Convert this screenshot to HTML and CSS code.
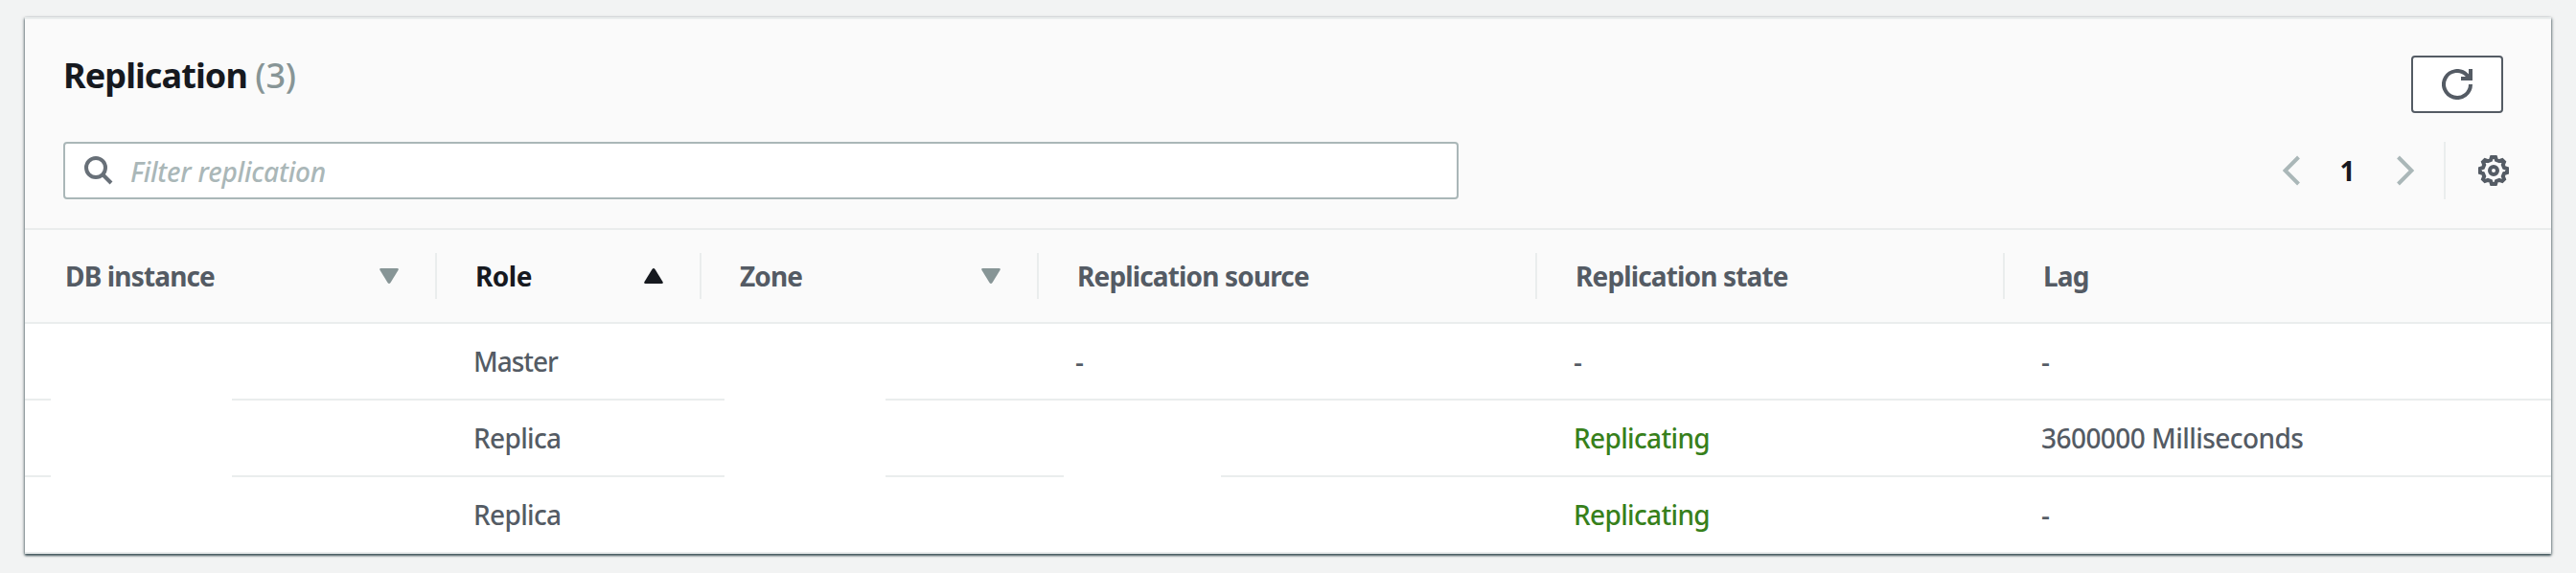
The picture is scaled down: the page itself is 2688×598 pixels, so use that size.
FILE: index.html
```html
<!DOCTYPE html>
<html lang="en">
<head>
<meta charset="utf-8">
<title>Replication</title>
<link rel="stylesheet" href="styles.css">
</head>
<body>
<section class="panel">
  <header class="toolbar">
    <div class="title-row">
      <h2 class="title">Replication <span class="count">(3)</span></h2>
      <button class="refresh" aria-label="Refresh">
        <svg width="32" height="32" viewBox="0 0 32 32" fill="none" stroke="currentColor" stroke-width="4"><path d="M30 16a14 14 0 1 1-4.100-9.900l2.500 3"/><path d="M30 0v10H20"/></svg>
      </button>
    </div>
    <div class="filter-row">
      <label class="search">
        <svg class="search-icon" width="30" height="30" viewBox="0 0 30 30" fill="none" stroke="currentColor" stroke-width="4"><circle cx="12" cy="12" r="10"/><path d="M19 19l9 9"/></svg>
        <span class="placeholder">Filter replication</span>
      </label>
      <nav class="pager">
        <svg class="arrow" width="18" height="32" viewBox="0 0 18 32" fill="none" stroke="currentColor" stroke-width="4"><path d="M16.500 2L2.500 16l14 14"/></svg>
        <span class="page">1</span>
        <svg class="arrow" width="18" height="32" viewBox="0 0 18 32" fill="none" stroke="currentColor" stroke-width="4"><path d="M1.500 2l14 14-14 14"/></svg>
        <span class="settings">
          <svg width="32" height="32" viewBox="0 0 32 32" fill="none" stroke="currentColor" stroke-width="4"><circle cx="16" cy="16" r="4"/><path d="M14 2h4l1 3 3 1.200 3-1.200 2 2-1.200 3 1.200 3 3 1v4l-3 1-1.200 3 1.200 3-2 2-3-1.200-3 1.200-1 3h-4l-1-3-3-1.200-3 1.200-2-2 1.200-3-1.200-3-3-1v-4l3-1 1.200-3L5 7l2-2 3 1.200 3-1.200z"/></svg>
        </span>
      </nav>
    </div>
  </header>
  <div class="grid head">
    <div class="cell first"><span>DB instance</span><svg class="sort" width="20" height="16" viewBox="0 0 20 16"><path d="M1.500 0h17q2 0 1 2l-8 13q-1.500 2-3 0L.500 2q-1-2 1-2z"/></svg></div>
    <div class="cell active"><span>Role</span><svg class="sort" width="20" height="16" viewBox="0 0 20 16"><path d="M1.500 16h17q2 0 1-2l-8-13q-1.500-2-3 0L.500 14q-1 2 1 2z"/></svg></div>
    <div class="cell"><span>Zone</span><svg class="sort" width="20" height="16" viewBox="0 0 20 16"><path d="M1.500 0h17q2 0 1 2l-8 13q-1.500 2-3 0L.500 2q-1-2 1-2z"/></svg></div>
    <div class="cell"><span>Replication source</span></div>
    <div class="cell"><span>Replication state</span></div>
    <div class="cell"><span>Lag</span></div>
  </div>
  <div class="grid row">
    <div class="cell"><i class="blank blank-db"></i></div><div class="cell"><span class="master">Master</span></div><div class="cell"><i class="blank blank-zone"></i></div><div class="cell">-</div><div class="cell">-</div><div class="cell">-</div>
  </div>
  <div class="grid row">
    <div class="cell"><i class="blank blank-db"></i></div><div class="cell"><span>Replica</span></div><div class="cell"><i class="blank blank-zone"></i></div><div class="cell"><i class="blank blank-source"></i></div><div class="cell"><span class="ok">Replicating</span></div><div class="cell"><span class="lag">3600000 Milliseconds</span></div>
  </div>
  <div class="grid row">
    <div class="cell"></div><div class="cell"><span>Replica</span></div><div class="cell"></div><div class="cell"></div><div class="cell"><span class="ok">Replicating</span></div><div class="cell">-</div>
  </div>
</section>
</body>
</html>
```
FILE: styles.css
```css
* { box-sizing: border-box; }
body {
  margin: 0;
  padding: 18px 26px 0;
  height: 598px;
  background: #f2f3f3;
  color: #545b64;
  font: 500 28px/40px "Noto Sans", sans-serif;
  overflow: hidden;
}
.panel {
  height: 560px;
  background: #fff;
  border-top: 2px solid #eaeded;
  box-shadow: 0 2px 2px 0 rgba(0, 28, 36, .5), 1px 1px 3px 0 rgba(0, 28, 36, .35), -1px 1px 3px 0 rgba(0, 28, 36, .35);
}
.toolbar {
  height: 220px;
  padding: 38px 50px 0 40px;
  background: #fafafa;
  border-bottom: 2px solid #eaeded;
}
.title-row { display: flex; justify-content: space-between; height: 90px; }
.title { margin: 0; font-size: 36px; line-height: 42px; font-weight: 700; letter-spacing: -.9px; color: #16191f; }
.count { font-weight: 500; letter-spacing: -.2px; color: #879596; }
.refresh {
  display: flex; align-items: center; justify-content: center;
  width: 96px; height: 60px; padding: 0;
  background: #fff; color: #545b64;
  border: 2px solid #545b64; border-radius: 4px;
}
.filter-row { display: flex; justify-content: space-between; }
.search {
  display: flex; align-items: center;
  width: 1456px; height: 60px; padding-left: 20px;
  background: #fff; border: 2px solid #aab7b8; border-radius: 4px;
}
.search-icon { color: #687078; }
.placeholder { margin-left: 18px; padding-top: 2px; font-style: italic; letter-spacing: -.2px; color: #aab7b8; }
.pager { display: flex; align-items: center; margin-right: -6px; }
.arrow { color: #aab7b8; }
.page { width: 101px; padding-right: 2px; text-align: center; font-weight: 700; color: #16191f; }
.settings {
  display: flex; align-items: center; justify-content: flex-end;
  width: 68px; height: 60px; margin-left: 31px;
  border-left: 2px solid #eaeded;
}
.grid { display: grid; grid-template-columns: 430px 276px 352px 520px 488px 1fr; }
.cell { position: relative; display: flex; align-items: center; white-space: nowrap; }
.head { height: 98px; background: #fafafa; border-bottom: 2px solid #eaeded; font-weight: 700; letter-spacing: -.85px; align-items: center; }
.head .cell { height: 48px; padding: 0 38px 0 40px; justify-content: space-between; border-right: 2px solid #eaeded; }
.head .first { padding-left: 42px; }
.head .cell:last-child { border-right: 0; }
.sort { fill: #879596; }
.head .active { color: #16191f; letter-spacing: -.5px; }
.active .sort { fill: #16191f; }
.row { height: 80px; border-bottom: 2px solid #eaeded; letter-spacing: -.65px; }
.row .cell { padding-left: 38px; }
.master { letter-spacing: -1px; }
.lag { letter-spacing: -.55px; }
.ok { color: #37801b; }

/* Hidden values cover part of the row divider */
.blank { position: absolute; height: 2px; bottom: -2px; background: #fff; }
.blank-db { left: 27px; width: 189px; }
.blank-zone { left: 24px; width: 168px; }
.blank-source { left: 26px; width: 164px; }
```
